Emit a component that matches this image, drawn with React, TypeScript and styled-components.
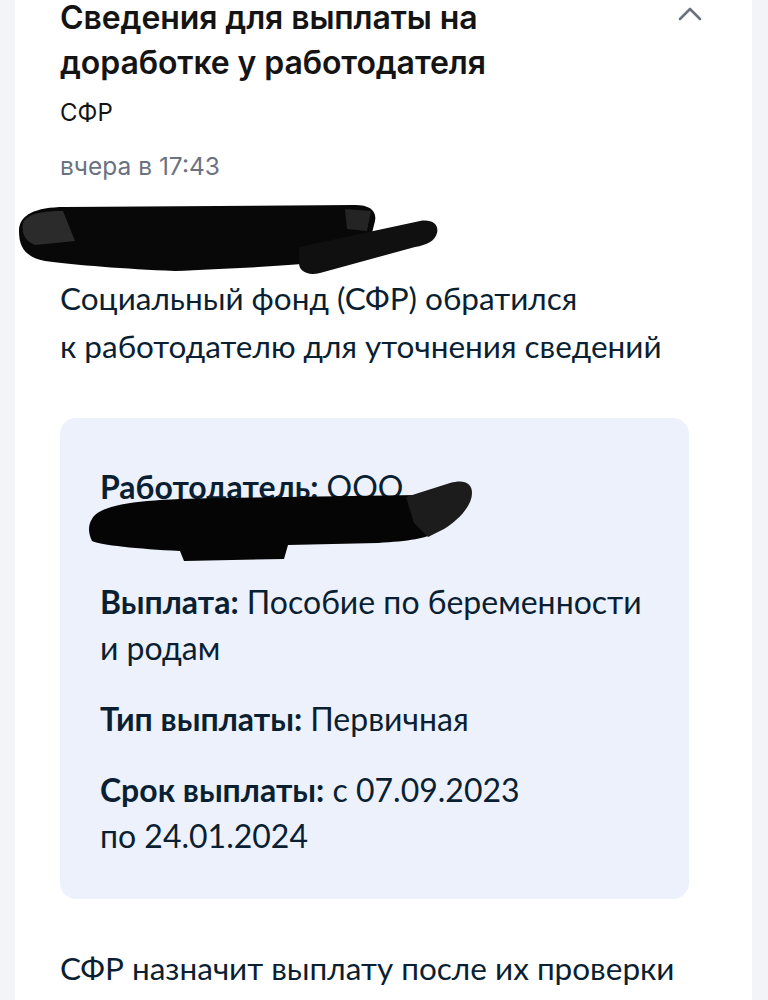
import styled, { createGlobalStyle } from 'styled-components'

const GlobalStyle = createGlobalStyle`
  html, body {
    margin: 0;
    padding: 0;
    background: #f3f4f8;
  }
`

const Page = styled.div`
  background: #f3f4f8;
  padding: 0 16px 0 15px;
  min-height: 1000px;
  overflow: hidden;
`

const Card = styled.section`
  background: #ffffff;
  padding: 0 63px 0 45px;
  min-height: 1000px;
`

const Header = styled.div`
  display: flex;
  align-items: flex-start;
  justify-content: space-between;
`

const Title = styled.h1`
  margin: 0;
  font-family: Inter, "Noto Sans", sans-serif;
  font-size: 32px;
  font-weight: 600;
  color: #141414;
  letter-spacing: -0.1px;
`

const TitleLine = styled.span<{ $first?: boolean }>`
  display: block;
  line-height: ${p => (p.$first ? '36px' : '45px')};
  margin-top: ${p => (p.$first ? 0 : 4)}px;
`

const Chevron = styled.svg`
  flex: none;
  margin: 6px -13px 0 0;
`

const Source = styled.div`
  margin-top: 13px;
  font-family: Inter, "Noto Sans", sans-serif;
  font-size: 24px;
  line-height: 30px;
  color: #141414;
`

const Time = styled.div`
  margin-top: 23px;
  font-family: Inter, "Noto Sans", sans-serif;
  font-size: 24.5px;
  line-height: 30px;
  color: #6b7280;
`

const Scribble = styled.svg<{ $shift?: number }>`
  display: block;
  margin-left: ${p => p.$shift ?? 0}px;
`

const Body = styled.p`
  margin: -3px 0 0;
  font-family: Lato, "Noto Sans", sans-serif;
  font-size: 31.5px;
  line-height: 48px;
  color: #0b1f33;
`

const InfoBox = styled.div`
  margin-top: 48px;
  background: #ecf1fc;
  border-radius: 16px;
  padding: 46px 40px 40px;
  display: flex;
  flex-direction: column;
  gap: 25px;
`

const Field = styled.div`
  font-family: Lato, "Noto Sans", sans-serif;
  font-size: 32px;
  line-height: 46px;
  color: #0b1f33;
`

const Label = styled.b`
  font-weight: 700;
`

const Footer = styled.p`
  margin: 45px 0 0;
  font-family: Lato, "Noto Sans", sans-serif;
  font-size: 31.5px;
  line-height: 48px;
  color: #0b1f33;
`

export default function App() {
  return (
    <Page>
      <GlobalStyle />
      <Card>
        <Header>
          <Title>
            <TitleLine $first>Сведения для выплаты на</TitleLine>
            <TitleLine>доработке у работодателя</TitleLine>
          </Title>
          <Chevron width="24" height="16" viewBox="0 0 24 16">
            <polyline
              points="2,13 12,3 22,13"
              fill="none"
              stroke="#6b7280"
              strokeWidth="2.6"
              strokeLinecap="round"
              strokeLinejoin="round"
            />
          </Chevron>
        </Header>
        <Source>СФР</Source>
        <Time>вчера в 17:43</Time>
        <Scribble $shift={-45} width="425" height="76" viewBox="0 0 425 76" style={{ marginTop: 20 }}>
          <path
            d="M4 30 C4 14 20 6 50 6 L340 4 C355 4 362 10 360 20 L356 36 L300 44 L296 62 C260 66 200 68 160 70 C110 68 60 64 30 60 C10 56 4 46 4 30 Z"
            fill="#080808"
          />
          <path
            d="M284 46 L405 20 C418 18 424 24 422 32 C420 40 412 44 400 46 L305 72 C292 75 284 70 284 62 Z"
            fill="#101010"
          />
          <path d="M8 22 C12 12 30 10 48 10 L60 40 L20 44 C10 40 6 32 8 22 Z" fill="#3a3a3a" opacity="0.7" />
          <path d="M330 8 L356 10 L352 30 L332 28 Z" fill="#2c2c2c" opacity="0.8" />
        </Scribble>
        <Body>
          Социальный фонд (СФР) обратился
          <br />к работодателю для уточнения сведений
        </Body>
        <InfoBox>
          <Field>
            <Label>Работодатель:</Label> ООО
            <Scribble
              $shift={-12}
              width="390"
              height="86"
              viewBox="0 0 390 86"
              style={{ marginTop: -31, marginBottom: -11 }}
            >
              <path
                d="M4 40 C12 24 60 20 130 19 L330 16 C345 16 350 22 350 30 L348 52 C340 60 320 62 290 64 L200 66 L196 80 L96 82 L92 72 C50 70 12 66 4 62 C0 54 0 46 4 40 Z"
                fill="#050505"
              />
              <path
                d="M318 18 L362 4 C376 0 384 4 384 14 C384 26 372 40 356 50 L340 58 L326 44 Z"
                fill="#1c1c1c"
              />
            </Scribble>
          </Field>
          <Field>
            <Label>Выплата:</Label> Пособие по беременности
            <br />и родам
          </Field>
          <Field>
            <Label>Тип выплаты:</Label> Первичная
          </Field>
          <Field>
            <Label>Срок выплаты:</Label> с 07.09.2023
            <br />
            по 24.01.2024
          </Field>
        </InfoBox>
        <Footer>СФР назначит выплату после их проверки</Footer>
      </Card>
    </Page>
  )
}
